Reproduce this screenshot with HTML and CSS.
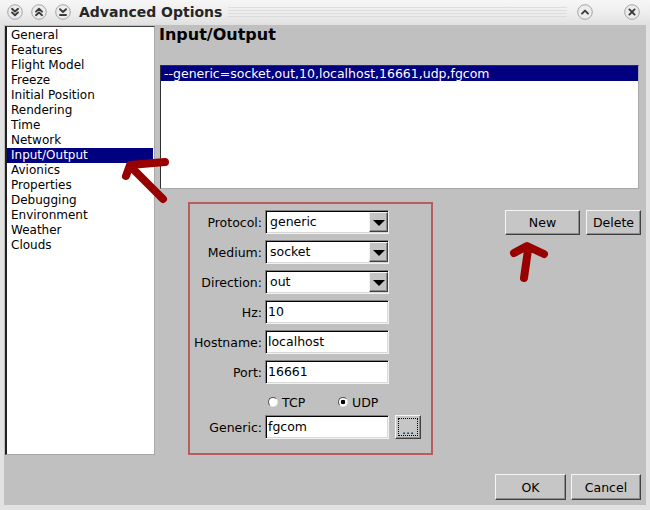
FILE: index.html
```html
<!DOCTYPE html>
<html>
<head>
<meta charset="utf-8">
<title>Advanced Options</title>
<link rel="stylesheet" href="styles.css">
</head>
<body>
<div class="window">
  <div class="titlebar">
    <span class="tb-btn"><svg viewBox="0 0 16 16" width="16" height="16"><circle cx="8" cy="8" r="7.3" class="tb-circle"/><polyline points="5,4.8 8,7.6 11,4.8" class="tb-ico"/><polyline points="5,8.4 8,11.2 11,8.4" class="tb-ico"/></svg></span>
    <span class="tb-btn"><svg viewBox="0 0 16 16" width="16" height="16"><circle cx="8" cy="8" r="7.3" class="tb-circle"/><polyline points="5,7.6 8,4.8 11,7.6" class="tb-ico"/><polyline points="5,11.2 8,8.4 11,11.2" class="tb-ico"/></svg></span>
    <span class="tb-btn"><svg viewBox="0 0 16 16" width="16" height="16"><circle cx="8" cy="8" r="7.3" class="tb-circle"/><polyline points="5,5.2 8,8 11,5.2" class="tb-ico"/><line x1="5" y1="11" x2="11" y2="11" class="tb-ico"/></svg></span>
    <span class="title">Advanced Options</span>
    <span class="stripes"></span>
    <span class="tb-btn tb-up"><svg viewBox="0 0 16 16" width="16" height="16"><circle cx="8" cy="8" r="7.3" class="tb-circle"/><polyline points="5,9.6 8,6.6 11,9.6" class="tb-ico"/></svg></span>
    <span class="tb-btn tb-close"><svg viewBox="0 0 16 16" width="16" height="16"><circle cx="8" cy="8" r="7.3" class="tb-circle"/><line x1="5.4" y1="5.4" x2="10.6" y2="10.6" class="tb-ico"/><line x1="10.6" y1="5.4" x2="5.4" y2="10.6" class="tb-ico"/></svg></span>
  </div>
  <div class="frame">
    <ul class="sidebar">
      <li>General</li>
      <li>Features</li>
      <li>Flight Model</li>
      <li>Freeze</li>
      <li>Initial Position</li>
      <li>Rendering</li>
      <li>Time</li>
      <li>Network</li>
      <li class="selected">Input/Output</li>
      <li>Avionics</li>
      <li>Properties</li>
      <li>Debugging</li>
      <li>Environment</li>
      <li>Weather</li>
      <li>Clouds</li>
    </ul>
    <div class="main">
      <h1 class="heading">Input/Output</h1>
      <div class="listbox">
        <div class="lb-row selected">--generic=socket,out,10,localhost,16661,udp,fgcom</div>
      </div>
      <div class="lower">
        <div class="group">
          <div class="form">
            <label class="lbl">Protocol:</label>
            <div class="combo"><span class="combo-text">generic</span><span class="combo-btn"><span class="tri"></span></span></div>
            <span></span>
            <label class="lbl">Medium:</label>
            <div class="combo"><span class="combo-text">socket</span><span class="combo-btn"><span class="tri"></span></span></div>
            <span></span>
            <label class="lbl">Direction:</label>
            <div class="combo"><span class="combo-text">out</span><span class="combo-btn"><span class="tri"></span></span></div>
            <span></span>
            <label class="lbl">Hz:</label>
            <div class="field">10</div>
            <span></span>
            <label class="lbl">Hostname:</label>
            <div class="field">localhost</div>
            <span></span>
            <label class="lbl">Port:</label>
            <div class="field">16661</div>
            <span></span>
            <span></span>
            <div class="radios">
              <span class="radio"><span class="radio-dot"></span>TCP</span>
              <span class="radio"><span class="radio-dot checked"></span>UDP</span>
            </div>
            <span></span>
            <label class="lbl">Generic:</label>
            <div class="field">fgcom</div>
            <span class="btn btn-dots">...</span>
          </div>
        </div>
        <div class="actions">
          <span class="btn btn-new">New</span>
          <span class="btn btn-delete">Delete</span>
        </div>
      </div>
      <div class="footer">
        <span class="btn btn-ok">OK</span>
        <span class="btn btn-cancel">Cancel</span>
      </div>
    </div>
  </div>
  <svg class="annotations" width="650" height="510" viewBox="0 0 650 510">
    <path d="M165,162 L130,165 L126,176 M130,166 L163,199" class="arrow"/>
    <path d="M514,253 L527,246 L544,254 M528,250 L524,278" class="arrow"/>
  </svg>
</div>
</body>
</html>
```
FILE: styles.css
```css
html, body {
  margin: 0;
  padding: 0;
}
body {
  background: #e4e4e4;
  font-family: "DejaVu Sans", "Liberation Sans", sans-serif;
  font-size: 12px;
  color: #000;
}
.window {
  position: relative;
  width: 650px;
  height: 510px;
  background: #e2e2e2;
  overflow: hidden;
}
.titlebar {
  height: 25px;
  box-sizing: border-box;
  display: flex;
  align-items: center;
  padding: 0 10px 1px 7px;
  background: linear-gradient(to bottom, #f6f6f6, #ececec 60%, #e0e0e0);
}
.tb-btn {
  width: 16px;
  height: 16px;
  display: block;
  margin-right: 8px;
}
.tb-btn svg { display: block; }
.tb-circle {
  fill: #ececec;
  stroke: #9c9c9c;
  stroke-width: 0.9;
}
.tb-ico {
  fill: none;
  stroke: #3a3a3a;
  stroke-width: 1.9;
  stroke-linecap: round;
  stroke-linejoin: round;
}
.title {
  font-weight: bold;
  font-size: 14px;
  color: #262626;
  white-space: nowrap;
}
.stripes {
  flex: 1;
  height: 10px;
  margin: 0 10px 0 6px;
  background: repeating-linear-gradient(to bottom, #d2d2d2 0, #d2d2d2 1px, transparent 1px, transparent 3px);
  opacity: 0.6;
}
.tb-up { margin-right: 31px; }
.tb-close { margin-right: 0; }

.frame {
  margin: 0 4px;
  height: 480px;
  box-sizing: border-box;
  background: #c0c0c0;
  display: flex;
  padding: 1px 6px 5px 1px;
}
.sidebar {
  list-style: none;
  margin: 0;
  padding: 1px 1px 0 0;
  width: 150px;
  height: 429px;
  box-sizing: border-box;
  background: #fff;
  border-top: 1px solid #404040;
  border-left: 2px solid #202020;
  border-right: 1px solid #a8a8a8;
  border-bottom: 1px solid #a8a8a8;
  flex: none;
}
.sidebar li {
  height: 15px;
  line-height: 15px;
  padding-left: 4px;
  white-space: nowrap;
}
.sidebar li.selected {
  background: #000080;
  color: #fff;
}
.main {
  flex: 1;
  margin-left: 4px;
  display: flex;
  flex-direction: column;
}
.heading {
  margin: 0;
  font-size: 16px;
  font-weight: bold;
  line-height: 17px;
  color: #000;
}
.listbox {
  margin: 22px 0 0 1px;
  width: 479px;
  height: 124px;
  box-sizing: border-box;
  background: #fff;
  border-top: 1px solid #303030;
  border-left: 1px solid #303030;
  border-right: 1px solid #a8a8a8;
  border-bottom: 1px solid #a8a8a8;
  font-size: 12.5px;
}
.lb-row {
  height: 15px;
  line-height: 15px;
  padding-left: 3px;
  white-space: nowrap;
}
.lb-row.selected {
  background: #000080;
  color: #fff;
}
.lower {
  display: flex;
  align-items: flex-start;
  margin-top: 13px;
}
.group {
  margin-left: 29px;
  width: 245px;
  height: 253px;
  box-sizing: border-box;
  border: 2px solid #b85c5c;
  padding-top: 6px;
}
.form {
  display: grid;
  grid-template-columns: 72px 124px auto;
  grid-template-rows: repeat(6, 24px) 19px 24px;
  column-gap: 3px;
  row-gap: 6px;
  align-items: center;
  font-size: 12.5px;
}
.lbl {
  text-align: right;
  white-space: nowrap;
}
.field, .combo {
  height: 24px;
  box-sizing: border-box;
  background: #fff;
  border-top: 1px solid #808080;
  border-left: 1px solid #808080;
  border-right: 1px solid #f2f2f2;
  border-bottom: 1px solid #f2f2f2;
  box-shadow: inset 1px 1px 0 #000, inset -1px -1px 0 #d8d8d8;
}
.field {
  padding-left: 2px;
  line-height: 22px;
  white-space: nowrap;
}
.combo {
  display: flex;
  align-items: center;
}
.combo-text {
  flex: 1;
  padding-left: 4px;
  line-height: 22px;
}
.combo-btn {
  width: 19px;
  height: 20px;
  box-sizing: border-box;
  background: #c4c4c4;
  border-top: 1px solid #f4f4f4;
  border-left: 1px solid #f4f4f4;
  border-right: 1px solid #404040;
  border-bottom: 1px solid #404040;
  box-shadow: inset -1px -1px 0 #8a8a8a;
  display: flex;
  align-items: center;
  justify-content: center;
}
.tri {
  width: 0;
  height: 0;
  border-left: 6px solid transparent;
  border-right: 6px solid transparent;
  border-top: 6px solid #000;
  margin-top: 1px;
}
.radios {
  align-self: end;
  display: flex;
  padding-left: 3px;
  height: 14px;
  align-items: center;
  margin-bottom: 0;
}
.radio {
  flex: none;
  display: flex;
  align-items: center;
  width: 70px;
  white-space: nowrap;
}
.radio-dot {
  width: 10px;
  height: 10px;
  box-sizing: border-box;
  border-radius: 50%;
  border: 1px solid;
  border-color: #505050 #e8e8e8 #e8e8e8 #505050;
  background: #fff;
  margin-right: 4px;
}
.radio-dot.checked {
  background: radial-gradient(circle, #000 0, #000 2px, #fff 2.6px);
}
.btn {
  display: flex;
  align-items: center;
  justify-content: center;
  box-sizing: border-box;
  background: #c6c6c6;
  border-top: 1px solid #f6f6f6;
  border-left: 1px solid #f6f6f6;
  border-right: 1px solid #404040;
  border-bottom: 1px solid #404040;
  box-shadow: inset -1px -1px 0 #8c8c8c;
  white-space: nowrap;
  color: #000;
  font-size: 12.5px;
}
.btn-dots {
  width: 26px;
  height: 24px;
  margin-left: 3px;
  outline: 1px dotted #000;
  outline-offset: -4px;
  line-height: 1;
  padding-top: 6px;
}
.actions {
  display: flex;
  gap: 6px;
  margin-left: 72px;
  margin-top: 8px;
}
.btn-new { width: 75px; height: 25px; }
.btn-delete { width: 55px; height: 25px; }
.footer {
  margin-top: auto;
  display: flex;
  justify-content: flex-end;
  gap: 5px;
}
.btn-ok { width: 71px; height: 26px; }
.btn-cancel { width: 70px; height: 26px; }
.annotations {
  position: absolute;
  left: 0;
  top: 0;
  pointer-events: none;
}
.arrow {
  fill: none;
  stroke: #990000;
  stroke-width: 8;
  stroke-linecap: round;
  stroke-linejoin: round;
}
```
